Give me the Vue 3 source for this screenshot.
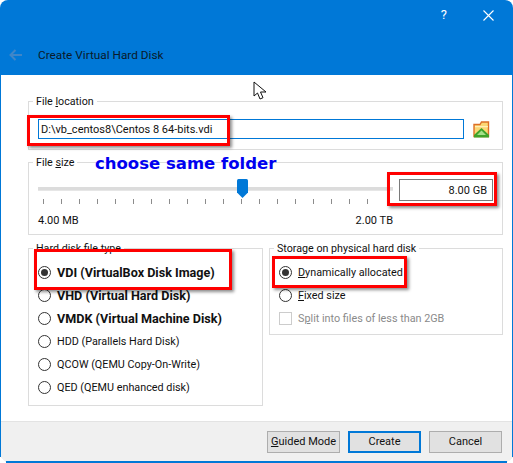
<script setup>
const ticks = Array.from({ length: 19 }, (_, i) => i)
const types = [
  { label: 'VDI (VirtualBox Disk Image)', bold: true, on: true },
  { label: 'VHD (Virtual Hard Disk)', bold: true },
  { label: 'VMDK (Virtual Machine Disk)', bold: true },
  { label: 'HDD (Parallels Hard Disk)' },
  { label: 'QCOW (QEMU Copy-On-Write)' },
  { label: 'QED (QEMU enhanced disk)' },
]
</script>

<template>
  <div class="window">
    <header class="head">
      <div class="caption">
        <span class="help">?</span>
        <svg class="close" width="11" height="11" viewBox="0 0 11 11"><path d="M.5.5l10 10M10.500.5l-10 10" stroke="#fff" stroke-width="1.100" fill="none"/></svg>
      </div>
      <div class="titlerow">
        <svg class="back" width="14" height="12" viewBox="0 0 14 12"><path d="M6.500 1L1.500 6l5 5M1.500 6H13" stroke="#3f86c8" stroke-width="2" fill="none"/></svg>
        <span class="title">Create Virtual Hard Disk</span>
      </div>
    </header>

    <main class="body">
      <fieldset class="group loc">
        <legend>File <u>l</u>ocation</legend>
        <div class="locrow">
          <div class="path">D:\vb_centos8\Centos 8 64-bits.vdi</div>
          <svg class="folder" width="17" height="17" viewBox="0 0 17 17">
            <path d="M1 15.500V3.500h6l1.500-2.500h7v14.500z" fill="#fbd774" stroke="#dd6f26" stroke-width="1.400"/>
            <path d="M2 5h13v1.200H2z" fill="#fff0b8"/>
            <path d="M8.500 7L16 14v2.500H1V14z" fill="#3fa329"/>
            <path d="M8.500 9.500L13 14H4z" fill="#a5e088"/>
          </svg>
        </div>
      </fieldset>

      <fieldset class="group size">
        <legend>File <u>s</u>ize</legend>
        <div class="sizerow">
          <div class="slider">
            <div class="track"></div>
            <svg class="thumb" width="11" height="19" viewBox="0 0 11 19"><path d="M0 1.500Q0 0 1.500 0h8Q11 0 11 1.500V13.500L5.500 19 0 13.500z" fill="#0078d7"/></svg>
          </div>
          <div class="sizeval">8.00 GB</div>
        </div>
        <div class="ticks"><i v-for="t in ticks" :key="t"></i></div>
        <div class="scale"><span>4.00 MB</span><span>2.00 TB</span></div>
      </fieldset>

      <div class="cols">
        <fieldset class="group types">
          <legend>Hard disk file type</legend>
          <label v-for="t in types" :key="t.label" class="opt" :class="{ bold: t.bold }">
            <span class="radio" :class="{ on: t.on }"></span>{{ t.label }}
          </label>
        </fieldset>
        <fieldset class="group storage">
          <legend>Storage on physical hard disk</legend>
          <label class="opt"><span class="radio on"></span><span><u>D</u>ynamically allocated</span></label>
          <label class="opt"><span class="radio"></span><span><u>F</u>ixed size</span></label>
          <label class="opt off"><span class="check"></span><span>S<u>p</u>lit into files of less than 2GB</span></label>
        </fieldset>
      </div>
    </main>

    <footer class="foot">
      <button class="btn"><u>G</u>uided Mode</button>
      <button class="btn primary">Create</button>
      <button class="btn">Cancel</button>
    </footer>

    <!-- annotations drawn over the screenshot -->
    <div class="mark m1"></div>
    <div class="mark m2"></div>
    <div class="mark m3"></div>
    <div class="mark m4"></div>
    <div class="note">choose same folder</div>
    <svg class="cursor" width="14" height="20" viewBox="0 0 14 20"><path d="M1 1v14l3.500-3 2.500 6 3-1.300-2.500-5.700H13z" fill="#fff" stroke="#111" stroke-width="1"/></svg>
    <span class="corner bl"></span>
    <span class="corner br"></span>
  </div>
</template>

<style>
html, body { margin: 0; background: #fff; }
</style>

<style scoped>
.window {
  position: relative;
  width: 513px;
  height: 463px;
  box-sizing: border-box;
  display: flex;
  flex-direction: column;
  background: #0078d7;
  border-radius: 8px 8px 0 0;
  padding: 0 1px 2px 1px;
  font-family: Roboto, "Open Sans", sans-serif;
  font-size: 11px;
  line-height: 16px;
  color: #111;
  overflow: hidden;
}
.head { height: 75px; display: flex; flex-direction: column; }
.caption { display: flex; justify-content: flex-end; align-items: center; height: 30px; padding-right: 18px; gap: 36px; }
.help { color: #fff; font-size: 13px; }
.titlerow { display: flex; align-items: center; margin-top: 17px; padding-left: 8px; }
.back { margin-right: 15px; }
.title { font-size: 11.800px; color: #0a1a2a; }
.body { flex: 1; background: #fff; padding: 17px 9px 0 27px; display: flex; flex-direction: column; gap: 3px; }
.group { margin: 0; border: 1px solid #dcdcdc; padding: 0 9px; min-width: 0; }
.group legend { padding: 2px 3px 0; margin: 0 0 -1px -5px; font-size: 10.700px; }
.loc { padding-top: 10px; padding-bottom: 10px; }
.locrow { display: flex; align-items: center; gap: 9px; }
.path { flex: 0 0 426px; box-sizing: border-box; height: 20px; border: 1px solid #0078d7; padding: 2px 2px 0; }
.sizerow { display: flex; align-items: center; gap: 6px; margin-top: 9px; }
.slider { position: relative; flex: 0 0 355px; height: 22px; }
.track { position: absolute; left: 0; right: 0; top: 8px; height: 3px; background: #dcdcdc; border: 1px solid #e6e6e6; border-width: 0 0 1px; }
.thumb { position: absolute; left: 199px; top: 0; }
.sizeval { flex: 0 0 94px; box-sizing: border-box; height: 22px; border: 1px solid #7a7a7a; text-align: right; padding: 3px 5px 0; }
.ticks { display: flex; gap: 17px; padding-left: 5px; margin-top: -2px; height: 5px; }
.ticks i { width: 1px; height: 5px; background: #8c8c8c; }
.scale { display: flex; justify-content: space-between; width: 355px; margin-top: 9px; padding-bottom: 5px; }
.cols { display: grid; grid-template-columns: 235px 234px; gap: 6px; align-items: start; margin-top: 1px; }
.opt { display: flex; align-items: center; height: 23px; gap: 6px; font-size: 10.800px; }
.bold { font-weight: 700; font-size: 12.600px; }
.types { padding-top: 5px; padding-bottom: 6px; }
.storage { padding-top: 5px; padding-bottom: 4px; }
.radio { width: 13px; height: 13px; box-sizing: border-box; border: 1px solid #333; border-radius: 50%; background: #fff; position: relative; flex: none; }
.radio.on::after { content: ""; position: absolute; inset: 2px; border-radius: 50%; background: #333; }
.check { width: 13px; height: 13px; box-sizing: border-box; border: 1px solid #ccc; flex: none; }
.off { color: #8a8a8a; }
.foot { height: 40px; box-sizing: border-box; background: #f0f0f0; border-top: 1px solid #e3e3e3; display: flex; justify-content: flex-end; align-items: center; gap: 8px; padding: 0 10px 0 0; }
.btn { width: 73px; height: 22px; box-sizing: border-box; border: 1px solid #adadad; background: #e1e1e1; font: inherit; color: #111; padding: 0; white-space: nowrap; }
.primary { border: 2px solid #0078d7; }
.mark { position: absolute; box-sizing: border-box; border: 3px solid #f00; box-shadow: 2px 2px 3px rgba(0,0,0,.45); }
.m1 { left: 27px; top: 115px; width: 203px; height: 31px; }
.m2 { left: 387px; top: 172px; width: 110px; height: 34px; }
.m3 { left: 34px; top: 249px; width: 198px; height: 41px; }
.m4 { left: 272px; top: 256px; width: 135px; height: 32px; }
.note { position: absolute; left: 95px; top: 153px; font-family: "DejaVu Sans", sans-serif; font-weight: 700; font-size: 16.500px; line-height: 22px; color: #0000f0; white-space: nowrap; }
.cursor { position: absolute; left: 253px; top: 81px; }
.corner { position: absolute; bottom: 0; width: 6px; height: 6px; }
.bl { left: 0; background: linear-gradient(225deg, #f0f0f0 50%, #fff 50%); }
.br { right: 0; background: linear-gradient(135deg, #f0f0f0 50%, #fff 50%); }
</style>
